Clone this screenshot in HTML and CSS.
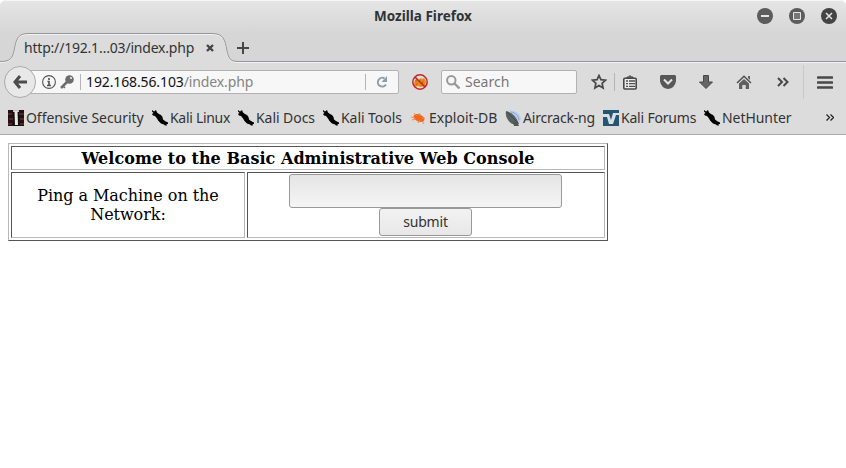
FILE: index.html
```
<!DOCTYPE html>
<html lang="en">
<head>
<meta charset="utf-8">
<title>Mozilla Firefox</title>
<link rel="stylesheet" href="styles.css">
</head>
<body>
<svg class="defs" width="0" height="0">
  <symbol id="dragon" viewBox="0 0 16 16"><path d="M0 0 2 1.500 4 0 5 2.500 7 4 9 5 10.500 7 11 9.500 13 11 16 12.500V14L14.500 14 15 15.500H13L12 14.500 9 13.500 6.500 11 5 8.500 3 6 1 5.500 0 4 1.500 3 0 1.500Z" fill="#000"/></symbol>
</svg>
<div class="window">
  <header class="chrome">
    <div class="titlebar">
      <span class="side"></span>
      <span class="title">Mozilla Firefox</span>
      <div class="controls">
        <svg width="16" height="16"><circle cx="8" cy="8" r="8" fill="#5c5c5c"/><path d="M4 8h8" stroke="#e5e5e5" stroke-width="2"/></svg>
        <svg width="16" height="16"><circle cx="8" cy="8" r="8" fill="#5c5c5c"/><path d="M4.500 4.500h7v7h-7z" fill="#777" stroke="#e5e5e5"/></svg>
        <svg width="16" height="16"><circle cx="8" cy="8" r="8" fill="#444"/><path d="m5 5 6 6m0-6-6 6" stroke="#e5e5e5" stroke-width="1.500"/></svg>
      </div>
    </div>
    <div class="tabs">
      <div class="tab">
        <svg class="tab-shape" width="846" height="30"><path d="M0 28.500C10 28.500 12 26 14 18C16 6 18 .5 28 .5H212C223 .5 225 6 227 18C229 26 230 28.500 239 28.500H846V30H0Z" fill="#dcdcdc"/><path d="M0 29.500C10 29.500 12 27 14 19C16 7 18 1.500 28 1.500H212C223 1.500 225 7 227 19C229 27 230 29.500 239 29.500H846" fill="none" stroke="#f2f2f2"/><path d="M0 28.500C10 28.500 12 26 14 18C16 6 18 .5 28 .5H212C223 .5 225 6 227 18C229 26 230 28.500 239 28.500H846" fill="none" stroke="#93979b"/></svg>
        <span class="tab-label">http://192.1…03/index.php</span>
        <svg class="tab-close" width="8" height="8"><path d="m1 1 6 6m0-6-6 6" stroke="#444" stroke-width="2.400"/></svg>
      </div>
      <svg class="plus" width="12" height="12"><path d="M6 0v12M0 6h12" stroke="#484848" stroke-width="2"/></svg>
    </div>
    <div class="nav">
      <div class="back"><svg width="14" height="14"><path d="M7 1 2 7l5 6M2 7h12" fill="none" stroke="#4c4c4c" stroke-width="3"/></svg></div>
      <div class="urlbar">
        <svg width="14" height="14"><circle cx="7" cy="7" r="6.400" fill="none" stroke="#555" stroke-width="1.100"/><path d="M7 3v2M5.500 6.500H7V10M5 10.500h4" fill="none" stroke="#555" stroke-width="1.700"/></svg>
        <svg class="key" width="14" height="14"><path d="M1 13 8 6" stroke="#6d6d6d" stroke-width="2.500"/><path d="M2.500 10.500 5 13" stroke="#6d6d6d" stroke-width="1.500"/><circle cx="9.500" cy="4.500" r="4.300" fill="#6d6d6d"/><circle cx="11" cy="3" r="1" fill="#f7f7f7"/></svg>
        <span class="rule"></span>
        <span class="url">192.168.56.103<i>/index.php</i></span>
        <span class="rule reload-rule"></span>
        <svg class="reload" width="12" height="12"><path d="M8.500 2.400A4.400 4.400 0 1 0 10 8.500" fill="none" stroke="#8c9caa" stroke-width="2"/><path d="M11 0v6H5.500Z" fill="#8c9caa"/></svg>
      </div>
      <svg class="noscript" width="16" height="16"><path d="M3 6 5 4l1 2 3-2 1 1 2-1 2 3-1 5-4 1-3-1-3 1-1-3Z" fill="#e78a12"/><path d="M3 7h2M8 6v3M11 7l-1 4M4 11l2-2" stroke="#b56a12"/><circle cx="8" cy="8" r="7.200" fill="none" stroke="#c8242b" stroke-width="1.500"/><path d="m3 3 10 10" stroke="#c8242b" stroke-width="1.600"/></svg>
      <div class="search">
        <svg width="14" height="14"><circle cx="5.300" cy="5.300" r="4.200" fill="none" stroke="#999" stroke-width="2"/><path d="m8.500 8.500 5 5" stroke="#999" stroke-width="2.400"/></svg>
        <span>Search</span>
      </div>
      <svg class="star" width="16" height="16"><path d="m8 1.500 1.900 4.200 4.700.5-3.500 3.100 1 4.700L8 11.600 3.900 14l1-4.700-3.500-3.100 4.700-.5Z" fill="none" stroke="#484848" stroke-width="1.700"/></svg>
      <span class="rule star-rule"></span>
      <svg class="list" width="14" height="15"><path d="M4 3.500V2h1.500L7 .5 8.500 2H10v1.500" fill="#666" stroke="#484848"/><rect x=".8" y="3.300" width="12.400" height="10.700" rx="1" fill="#ececec" stroke="#484848" stroke-width="1.600"/><path d="M3 6h2m1 0h6M3 8.700h2m1 0h6M3 11.400h2m1 0h6" stroke="#505050" stroke-width="1.300"/></svg>
      <svg class="pocket" width="16" height="14"><path d="M1 0h14l1 1v5q-1 7-8 8Q1 13 0 6V1Z" fill="#585858"/><path d="m4 4.500 4 4 4-4" fill="none" stroke="#e4e4e4" stroke-width="2"/></svg>
      <svg class="down" width="14" height="14"><path d="M4.500.5h5V7h4L7 13.500.5 7h4Z" fill="#656565" stroke="#484848"/></svg>
      <svg class="home" width="16" height="15"><path d="M1 8 8 1.300 15 8" fill="none" stroke="#505050" stroke-width="1.500"/><path d="M12 1h2v4l-2-2ZM3 8.500 8 4l5 4.500V14H9.700v-4H6.300v4H3Z" fill="#606060"/></svg>
      <svg class="more" width="12" height="10"><path d="m1 1 4 4-4 4M6.500 1l4 4-4 4" fill="none" stroke="#484848" stroke-width="2"/></svg>
      <span class="rule menu-rule"></span>
      <svg class="menu" width="16" height="13"><path d="M1 1.500h14M1 6.500h14M1 11.500h14" stroke="#484848" stroke-width="2.600" stroke-linecap="round"/></svg>
    </div>
    <div class="bookmarks">
      <div class="mark offsec"><svg width="16" height="16"><path d="M0 0h16v16H0z" fill="#241012"/><path d="M0 4h4M1 9h4M11 4h5M12 9h4M0 14h4M12 14h4" stroke="#4e2629" stroke-width="2"/><path d="M5 0h6v16H5z" fill="#111"/><path d="M5 0h6v2H5z" fill="#bfc4c0"/><path d="M6.500 1h3l.5 14H7Z" fill="#e8ece9"/></svg><span>Offensive Security</span></div>
      <div class="mark linux"><svg width="16" height="16"><use href="#dragon"/></svg><span>Kali Linux</span></div>
      <div class="mark docs"><svg width="16" height="16"><use href="#dragon"/></svg><span>Kali Docs</span></div>
      <div class="mark tools"><svg width="16" height="16"><use href="#dragon"/></svg><span>Kali Tools</span></div>
      <div class="mark exploit"><svg width="16" height="16"><ellipse cx="8" cy="8" rx="5.800" ry="3.500" transform="rotate(25 8 8)" fill="#ef681c"/><path d="m0 7 4 1M3 3l3 3M8 3l2 3M1 10l4-1M7 13l2-3M13 14l-2-3M14 8l-3 0" stroke="#f08a50"/></svg><span>Exploit-DB</span></div>
      <div class="mark aircrack"><svg width="16" height="16"><path d="M4 0q11 1 12 9l-3 6Z" fill="#b8cced"/><path d="M6 2q7 1 8 8" fill="none" stroke="#87a9dd"/><path d="M1 1Q10 3 14 14 7 16 3 10 0 6 1 1Z" fill="#58605f"/><path d="m2 2 11 11" stroke="#434a49"/><path d="m8 12 1 4h5l-2-4Z" fill="#555"/></svg><span>Aircrack-ng</span></div>
      <div class="mark forums"><svg width="16" height="16"><path d="M0 0h16v16H0z" fill="#245673"/><path d="M0 4h6l2 6 2-7h6v2h-3L10 14H6L4 7H0Z" fill="#d7e0e5"/></svg><span>Kali Forums</span></div>
      <div class="mark hunter"><svg width="16" height="16"><use href="#dragon"/></svg><span>NetHunter</span></div>
      <svg class="overflow" width="8" height="7"><path d="m.5.5 3 3-3 3M4.500.5l3 3-3 3" fill="none" stroke="#222" stroke-width="1.300"/></svg>
    </div>
  </header>
  <main>
    <form>
      <table class="console">
        <tr class="heading"><th colspan="2">Welcome to the Basic Administrative Web Console</th></tr>
        <tr class="ping"><td class="label">Ping a Machine on the Network:</td><td class="fields"><input type="text" aria-label="Machine"><button type="button">submit</button></td></tr>
      </table>
    </form>
  </main>
</div>
</body>
</html>
```
FILE: styles.css
```
* { box-sizing: border-box; }
body { margin: 0; background: #fff; font-family: "Noto Sans", sans-serif; font-size: 14px; color: #333; overflow: hidden; }
svg { display: block; flex: none; }
.defs { position: absolute; }
.window { width: 846px; height: 468px; background: #fff; }
.chrome { height: 135px; background: #dcdcdc; border-bottom: 1px solid #a9a9a9; border-radius: 6px 6px 0 0; }
.titlebar { height: 33px; display: flex; align-items: center; justify-content: space-between; padding: 0 9px 3px; background: linear-gradient(#e5e5e5, #d6d6d6); border-top: 1px solid #f7f7f7; border-radius: 6px 6px 0 0; }
.side, .controls { width: 80px; }
.title { font-size: 13.5px; font-weight: bold; color: #2e3436; white-space: nowrap; }
.controls { display: flex; gap: 16px; }
.tabs { height: 30px; background: #d6d6d6; display: flex; align-items: center; }
.tab { position: relative; width: 237px; height: 30px; display: flex; align-items: center; padding-left: 24px; }
.tab-shape { position: absolute; left: 0; top: 0; }
.tab-label { position: relative; width: 182px; white-space: nowrap; letter-spacing: -.2px; padding-bottom: 2px; }
.tab-close { position: relative; }
.plus { position: relative; }
.nav { height: 38px; display: flex; align-items: center; padding-left: 4px; }
.back { position: relative; z-index: 1; width: 32px; height: 32px; flex: none; border: 1px solid #aaa; border-radius: 50%; background: #e8e8e8; display: flex; align-items: center; justify-content: center; }
.urlbar { width: 369px; height: 24px; flex: none; margin-left: -6px; border: 1px solid #b2b2b2; border-radius: 0 2px 2px 0; background: #f7f7f7; display: flex; align-items: center; padding-left: 11px; }
.key { margin-left: 4px; }
.rule { width: 1px; height: 16px; background: #b4b4b4; flex: none; }
.urlbar .rule { margin-left: 6px; }
.url { color: #111; width: 273px; margin-left: 5px; letter-spacing: -.12px; white-space: nowrap; }
.url i { color: #858585; font-style: normal; }
.reload { margin-left: 10px; }
.noscript { margin-left: 13px; }
.search { width: 136px; height: 24px; margin-left: 13px; border: 1px solid #b2b2b2; border-radius: 2px; background: #f7f7f7; display: flex; align-items: center; gap: 5px; padding-left: 4px; color: #777; }
.star { margin-left: 14px; }
.star-rule { margin-left: 7px; height: 18px; }
.list { margin-left: 8px; }
.pocket { margin-left: 23px; }
.down { margin-left: 23px; }
.home { margin-left: 23px; }
.more { margin-left: 25px; }
.menu-rule { margin-left: 14px; height: 34px; background: #c9c9c9; }
.menu { margin-left: 13px; }
.bookmarks { height: 33px; display: flex; align-items: center; padding-left: 8px; }
.mark { display: flex; align-items: center; gap: 2px; flex: none; white-space: nowrap; letter-spacing: -.06px; }
.url, .search span { padding-bottom: 2px; }
.offsec { width: 144px; }
.linux { width: 86px; letter-spacing: -.3px; }
.docs { width: 85px; }
.tools { width: 88px; }
.exploit { width: 94px; letter-spacing: 0; }
.aircrack { width: 98px; letter-spacing: -.2px; }
.forums { width: 101px; letter-spacing: -.2px; }
.hunter { width: 122px; }
main { padding: 8px; font-family: "DejaVu Serif", serif; font-size: 16px; line-height: 19px; color: #000; }
.console { display: grid; grid-template-columns: 234px 358px; grid-template-rows: 24px 66px; gap: 2px; width: 600px; height: 98px; padding: 2px; border: 1px solid; border-color: #b8b8b8 #555 #555 #b8b8b8; text-align: center; }
.console tbody, .console tr { display: contents; }
.console th, .console td { border: 1px solid; border-color: #555 #b8b8b8 #b8b8b8 #555; padding: 1px; }
.console th { grid-column: 1 / 3; line-height: 21px; letter-spacing: .04px; }
.console .label { padding: 13px 20px; letter-spacing: -.05px; }
.console .fields { display: flex; flex-direction: column; align-items: center; padding-right: 3px; }
input { width: 273px; height: 34px; border: 1px solid #999; border-radius: 3px; background: linear-gradient(#e5e5e5, #f5f5f5); }
button { width: 93px; height: 28px; padding: 0 0 2px 1px; border: 1px solid #999; border-radius: 3px; background: linear-gradient(#f2f2f2, #e8e8e8); font: 14px "Noto Sans", sans-serif; letter-spacing: -.2px; color: #333; }
```
